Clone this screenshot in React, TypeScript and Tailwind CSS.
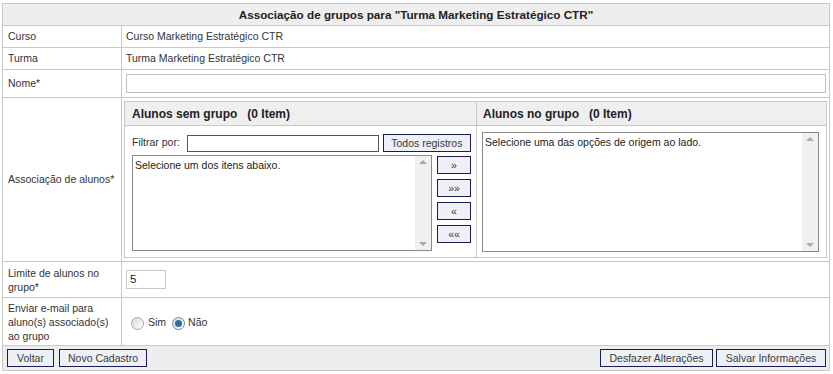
import React from "react";

const font = { fontFamily: '"Liberation Sans", Arial, sans-serif' };

function Btn({ children, className = "" }: { children: React.ReactNode; className?: string }) {
  return (
    <button
      className={`h-[18px] border border-[#1c1c52] bg-[#eef0f7] text-[10.5px] text-[#3a3a3a] leading-none ${className}`}
    >
      {children}
    </button>
  );
}

function Listbox({ text, className = "" }: { text: string; className?: string }) {
  return (
    <div className={`flex border border-[#8a8a8a] bg-white ${className}`}>
      <div className="flex-1 pl-[2px] pt-[2px] text-[10.5px] text-[#222]">{text}</div>
      <div className="flex w-[16px] flex-col items-center justify-between bg-[#f0f0f0] py-[4px]">
        <span className="block h-0 w-0 border-x-[4px] border-b-[4px] border-x-transparent border-b-[#a8a8a8]" />
        <span className="block h-0 w-0 border-x-[4px] border-t-[4px] border-x-transparent border-t-[#a8a8a8]" />
      </div>
    </div>
  );
}

function Radio({ checked }: { checked?: boolean }) {
  return (
    <span className={`flex h-[13px] w-[13px] items-center justify-center rounded-full border ${checked ? "border-[#5a8ab0]" : "border-[#a0a8b0]"} bg-gradient-to-br from-[#d8d8d8] to-white`}>
      {checked && <span className="h-[7px] w-[7px] rounded-full bg-[#2d6ea0]" />}
    </span>
  );
}

export default function App() {
  return (
    <div className="h-[374px] w-[833px] bg-white pl-[2px] pt-[3px] text-[10.5px] text-[#333]" style={font}>
      <div className="w-[828px] border border-[#c8c8c8]">
        {/* title */}
        <div className="flex h-[22px] items-center justify-center border-b border-[#c8c8c8] bg-[#eeeeee] pt-[1px] text-[11.7px] font-bold text-[#222]">
          Associação de grupos para "Turma Marketing Estratégico CTR"
        </div>
        {/* Curso */}
        <div className="flex h-[22px] border-b border-[#c8c8c8]">
          <div className="flex w-[119px] items-center border-r border-[#c8c8c8] pl-[5px] pt-[1px]">Curso</div>
          <div className="flex flex-1 items-center pl-[4px] pt-[1px]">Curso Marketing Estratégico CTR</div>
        </div>
        <div className="flex h-[22px] border-b border-[#c8c8c8]">
          <div className="flex w-[119px] items-center border-r border-[#c8c8c8] pl-[5px] pt-[1px]">Turma</div>
          <div className="flex flex-1 items-center pl-[4px] pt-[1px]">Turma Marketing Estratégico CTR</div>
        </div>
        <div className="flex h-[28px] border-b border-[#c8c8c8]">
          <div className="flex w-[119px] items-center border-r border-[#c8c8c8] pl-[5px] pt-[1px]">Nome*</div>
          <div className="flex flex-1 items-center pl-[4px] pr-[3px]">
            <div className="h-[19px] w-full border border-[#c0c0c0] bg-white" />
          </div>
        </div>
        {/* Associação */}
        <div className="flex h-[164px] border-b border-[#c8c8c8]">
          <div className="flex w-[119px] items-center border-r border-[#c8c8c8] pl-[5px]">Associação de alunos*</div>
          <div className="flex-1 px-[2px] py-[3px]">
            <div className="flex h-[157px] border border-[#c8c8c8]">
              <div className="flex w-[352px] flex-col border-r border-[#c8c8c8]">
                <div className="flex h-[24px] items-center border-b border-[#c8c8c8] bg-[#efefef] pl-[7px] text-[12px] font-bold text-[#222]">
                  Alunos sem grupo&nbsp;&nbsp;&nbsp;(0 Item)
                </div>
                <div className="flex items-center pl-[7px] pt-[8px]">
                  <span>Filtrar por:</span>
                  <div className="ml-[7px] h-[17px] w-[192px] border border-[#555] bg-white" />
                  <Btn className="ml-[4px] w-[88px]">Todos registros</Btn>
                </div>
                <div className="flex pl-[7px] pt-[3px]">
                  <Listbox text="Selecione um dos itens abaixo." className="h-[96px] w-[300px]" />
                  <div className="ml-[5px] flex flex-col gap-[5px] pt-[1px]">
                    <Btn className="h-[16px] w-[34px] text-[9px]">»</Btn>
                    <Btn className="h-[16px] w-[34px] text-[9px]">»»</Btn>
                    <Btn className="h-[16px] w-[34px] text-[9px]">«</Btn>
                    <Btn className="h-[16px] w-[34px] text-[9px]">««</Btn>
                  </div>
                </div>
              </div>
              <div className="flex flex-1 flex-col">
                <div className="flex h-[24px] items-center border-b border-[#c8c8c8] bg-[#efefef] pl-[6px] text-[12px] font-bold text-[#222]">
                  Alunos no grupo&nbsp;&nbsp;&nbsp;(0 Item)
                </div>
                <div className="pl-[5px] pr-[7px] pt-[6px]">
                  <Listbox text="Selecione uma das opções de origem ao lado." className="h-[120px] w-full" />
                </div>
              </div>
            </div>
          </div>
        </div>
        {/* Limite */}
        <div className="flex h-[36px] border-b border-[#c8c8c8]">
          <div className="flex w-[119px] items-center border-r border-[#c8c8c8] pl-[5px] leading-[14px]">
            Limite de alunos no grupo*
          </div>
          <div className="flex flex-1 items-center pl-[4px]">
            <div className="flex h-[19px] w-[40px] items-center border border-[#c8c8c8] bg-white pl-[3px] text-[11.5px] text-[#222]">5</div>
          </div>
        </div>
        {/* Enviar */}
        <div className="flex h-[48px] border-b border-[#c8c8c8]">
          <div className="flex w-[119px] items-center border-r border-[#c8c8c8] pl-[5px] leading-[14px]">
            Enviar e-mail para aluno(s) associado(s) ao grupo
          </div>
          <div className="flex flex-1 items-center pl-[9px] pt-[3px]">
            <Radio />
            <span className="ml-[4px]">Sim</span>
            <span className="ml-[6px]"><Radio checked /></span>
            <span className="ml-[3px]">Não</span>
          </div>
        </div>
        {/* footer */}
        <div className="flex h-[24px] items-center justify-between bg-[#eeeeee] pl-[4px] pr-[3px]">
          <div className="flex gap-[5px]">
            <Btn className="w-[47px]">Voltar</Btn>
            <Btn className="w-[88px]">Novo Cadastro</Btn>
          </div>
          <div className="flex gap-[3px]">
            <Btn className="w-[113px]">Desfazer Alterações</Btn>
            <Btn className="w-[110px]">Salvar Informações</Btn>
          </div>
        </div>
      </div>
    </div>
  );
}
